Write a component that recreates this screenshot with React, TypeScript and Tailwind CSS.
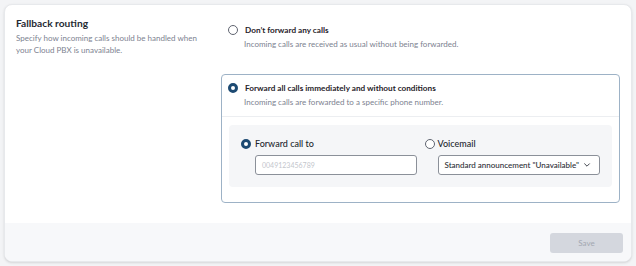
const font = { fontFamily: "Lato, 'Noto Sans', sans-serif" };

const Radio = ({ checked }: { checked?: boolean }) =>
  checked ? (
    <span className="block h-[10px] w-[10px] shrink-0 rounded-full border-[3px] border-[#1d4a72] bg-white" />
  ) : (
    <span className="block h-[10px] w-[10px] shrink-0 rounded-full border border-[#5f6470] bg-white" />
  );

const Chevron = () => (
  <svg width="8" height="8" viewBox="0 0 10 10" fill="none" stroke="#3a3e47" strokeWidth="1.2">
    <path d="M2 3.5 L5 6.5 L8 3.5" strokeLinecap="round" strokeLinejoin="round" />
  </svg>
);

export default function App() {
  return (
    <div className="h-[266px] w-[636px] bg-[#f3f4f6] p-1" style={font}>
      <div className="flex h-full flex-col overflow-hidden rounded-lg border border-[#e7e9ec] bg-white shadow-sm">
        <div className="flex flex-1 gap-4 px-[11px] pt-[11px] pb-5">
          <div className="w-[189px] shrink-0">
            <h2 className="text-[10.2px] leading-[14px] font-bold text-[#262a32]">Fallback routing</h2>
            <p className="mt-[3px] text-[8px] leading-[11.5px] text-[#7d8290]">
              Specify how incoming calls should be handled when your Cloud PBX is unavailable.
            </p>
          </div>

          <div className="flex flex-1 flex-col gap-[15px]">
            <div className="rounded border border-transparent px-[6px] pt-[7px] pb-2">
              <div className="flex items-center gap-[7px]">
                <Radio />
                <span className="text-[8.2px] leading-[12px] font-bold text-[#1f2229]">Don’t forward any calls</span>
              </div>
              <p className="mt-[2px] pl-[16px] text-[8px] leading-[12px] text-[#7d8290]">
                Incoming calls are received as usual without being forwarded.
              </p>
            </div>

            <div className="rounded border border-[#9db2c6] pb-[15px]">
              <div className="border-b border-[#eceef1] px-[6px] pt-[7px] pb-2">
                <div className="flex items-center gap-[7px]">
                  <Radio checked />
                  <span className="text-[8.2px] leading-[12px] font-bold text-[#1f2229]">
                    Forward all calls immediately and without conditions
                  </span>
                </div>
                <p className="mt-[2px] pl-[16px] text-[8px] leading-[12px] text-[#7d8290]">
                  Incoming calls are forwarded to a specific phone number.
                </p>
              </div>

              <div className="mx-[7px] mt-2 grid grid-cols-2 gap-2 rounded bg-[#f5f6f8] px-3 py-3">
                <div>
                  <div className="flex items-center gap-[4px]">
                    <Radio checked />
                    <span className="text-[9px] leading-[14px] font-medium text-[#23262d]">Forward call to</span>
                  </div>
                  <div className="mt-1 ml-[14px] flex h-[20px] items-center rounded-[3px] border border-[#8b9099] bg-white px-[6px]">
                    <span className="text-[7px] text-[#c3c6cc]">0049123456789</span>
                  </div>
                </div>
                <div>
                  <div className="flex items-center gap-[3px]">
                    <Radio />
                    <span className="text-[9px] leading-[14px] font-medium text-[#23262d]">Voicemail</span>
                  </div>
                  <div className="mt-1 ml-[13px] flex h-[20px] items-center justify-between rounded-[3px] border border-[#8b9099] bg-white pr-[8px] pl-[6px]">
                    <span className="text-[8px] font-medium text-[#2b2e35]">Standard announcement "Unavailable"</span>
                    <Chevron />
                  </div>
                </div>
              </div>
            </div>
          </div>
        </div>

        <div className="flex justify-end bg-[#f7f8fa] px-2 py-2.5">
          <button className="h-[20px] w-[73px] rounded-[3px] bg-[#d4d7de] text-[8px] text-[#a3a7b1]">Save</button>
        </div>
      </div>
    </div>
  );
}
